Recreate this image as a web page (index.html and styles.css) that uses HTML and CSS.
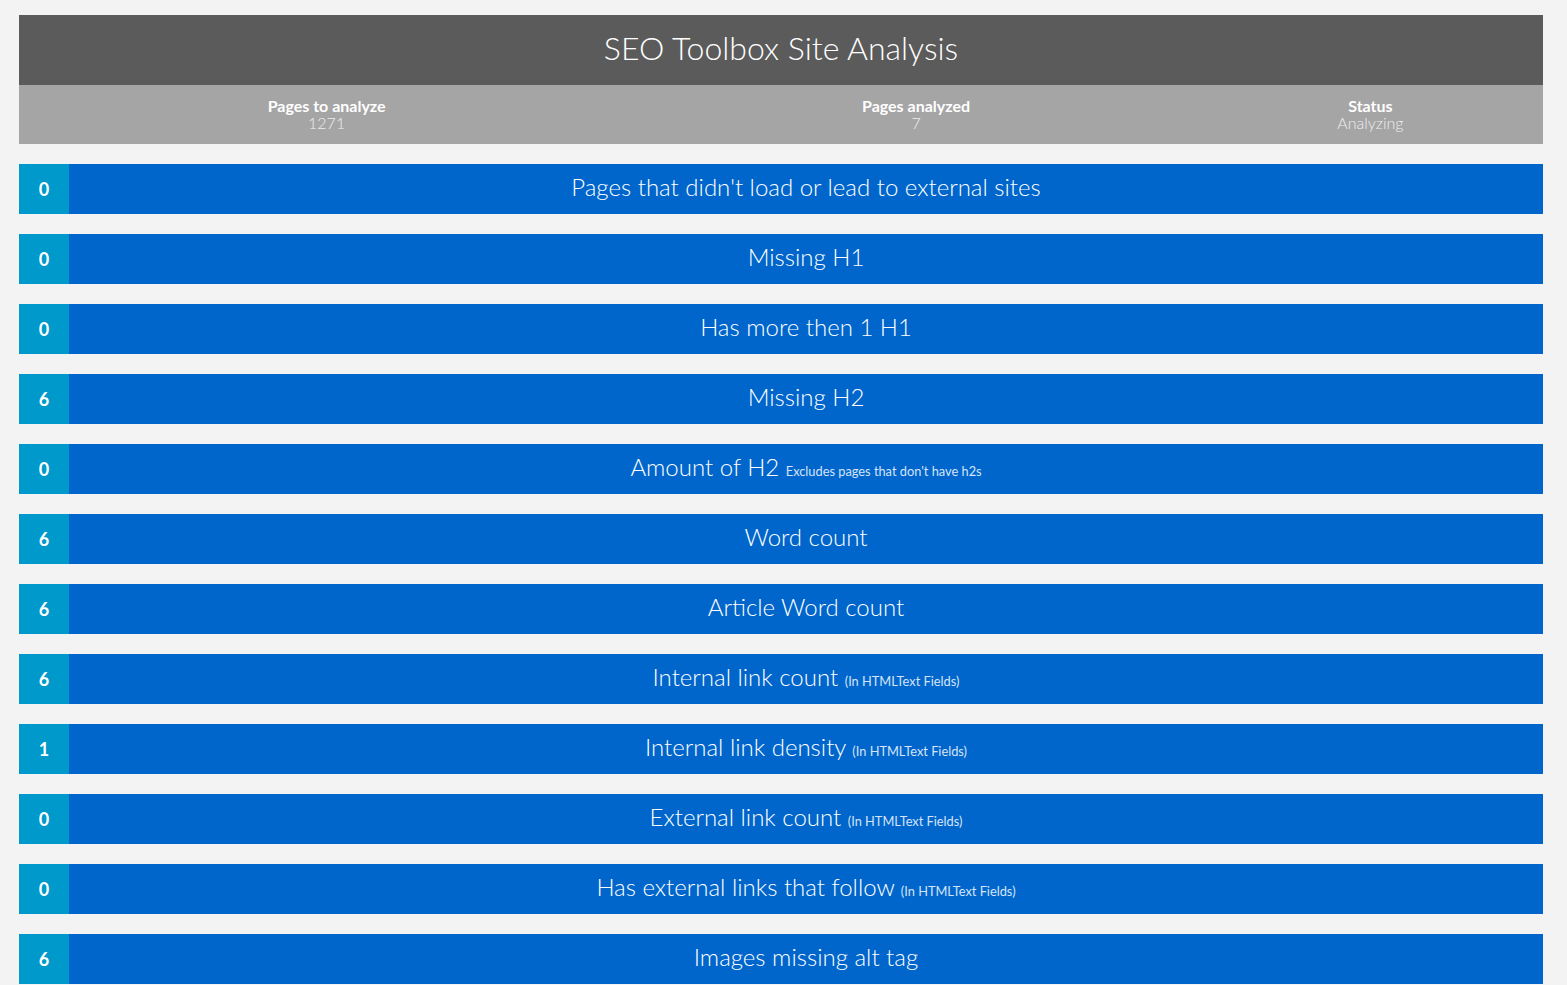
FILE: index.html
```html
<!DOCTYPE html>
<html>
<head>
<meta charset="utf-8">
<link rel="stylesheet" href="styles.css">
</head>
<body>
<div class="wrap">
  <div class="header">SEO Toolbox Site Analysis</div>
  <table class="stats">
    <tr>
      <td><div class="label">Pages to analyze</div><div class="value">1271</div></td>
      <td><div class="label">Pages analyzed</div><div class="value">7</div></td>
      <td><div class="label">Status</div><div class="value">Analyzing</div></td>
    </tr>
  </table>
  <div class="rows">
    <div class="row"><div class="num">0</div><div class="title">Pages that didn't load or lead to external sites</div></div>
    <div class="row"><div class="num">0</div><div class="title">Missing H1</div></div>
    <div class="row"><div class="num">0</div><div class="title">Has more then 1 H1</div></div>
    <div class="row"><div class="num">6</div><div class="title">Missing H2</div></div>
    <div class="row"><div class="num">0</div><div class="title">Amount of H2 <small>Excludes pages that don't have h2s</small></div></div>
    <div class="row"><div class="num">6</div><div class="title">Word count</div></div>
    <div class="row"><div class="num">6</div><div class="title">Article Word count</div></div>
    <div class="row"><div class="num">6</div><div class="title">Internal link count <small>(In HTMLText Fields)</small></div></div>
    <div class="row"><div class="num">1</div><div class="title">Internal link density <small>(In HTMLText Fields)</small></div></div>
    <div class="row"><div class="num">0</div><div class="title">External link count <small>(In HTMLText Fields)</small></div></div>
    <div class="row"><div class="num">0</div><div class="title">Has external links that follow <small>(In HTMLText Fields)</small></div></div>
    <div class="row"><div class="num">6</div><div class="title">Images missing alt tag</div></div>
  </div>
</div>
</body>
</html>
```

FILE: styles.css
```css
html, body {
  margin: 0;
  padding: 0;
  background: #f3f3f3;
  font-family: Lato, "Open Sans", sans-serif;
}
.wrap {
  padding: 15px 24px 0 19px;
}
.header {
  height: 70px;
  background: #5b5b5b;
  color: #ffffff;
  font-weight: 300;
  font-size: 32px;
  line-height: 66px;
  text-align: center;
}
.stats {
  width: 100%;
  border-collapse: collapse;
  background: #a5a5a5;
  height: 59px;
}
.stats td {
  padding: 0 0 2px 0;
  text-align: center;
  vertical-align: middle;
  font-size: 16px;
  line-height: 17px;
}
.label {
  font-weight: 700;
  color: #ffffff;
}
.value {
  font-weight: 300;
  color: #eeeeee;
}
.rows {
  display: flex;
  flex-direction: column;
  gap: 20px;
  padding-top: 20px;
}
.row {
  display: flex;
  height: 50px;
  background: #0066cc;
}
.num {
  width: 50px;
  flex: none;
  background: #0099cc;
  color: #ffffff;
  font-weight: 700;
  font-size: 18px;
  display: flex;
  align-items: center;
  justify-content: center;
}
.title {
  flex: 1;
  text-align: center;
  color: #ffffff;
  font-weight: 300;
  font-size: 24px;
  line-height: 46px;
  white-space: nowrap;
}
.title small {
  font-size: 12.8px;
  font-weight: 400;
  color: #d6e4f7;
}
```
